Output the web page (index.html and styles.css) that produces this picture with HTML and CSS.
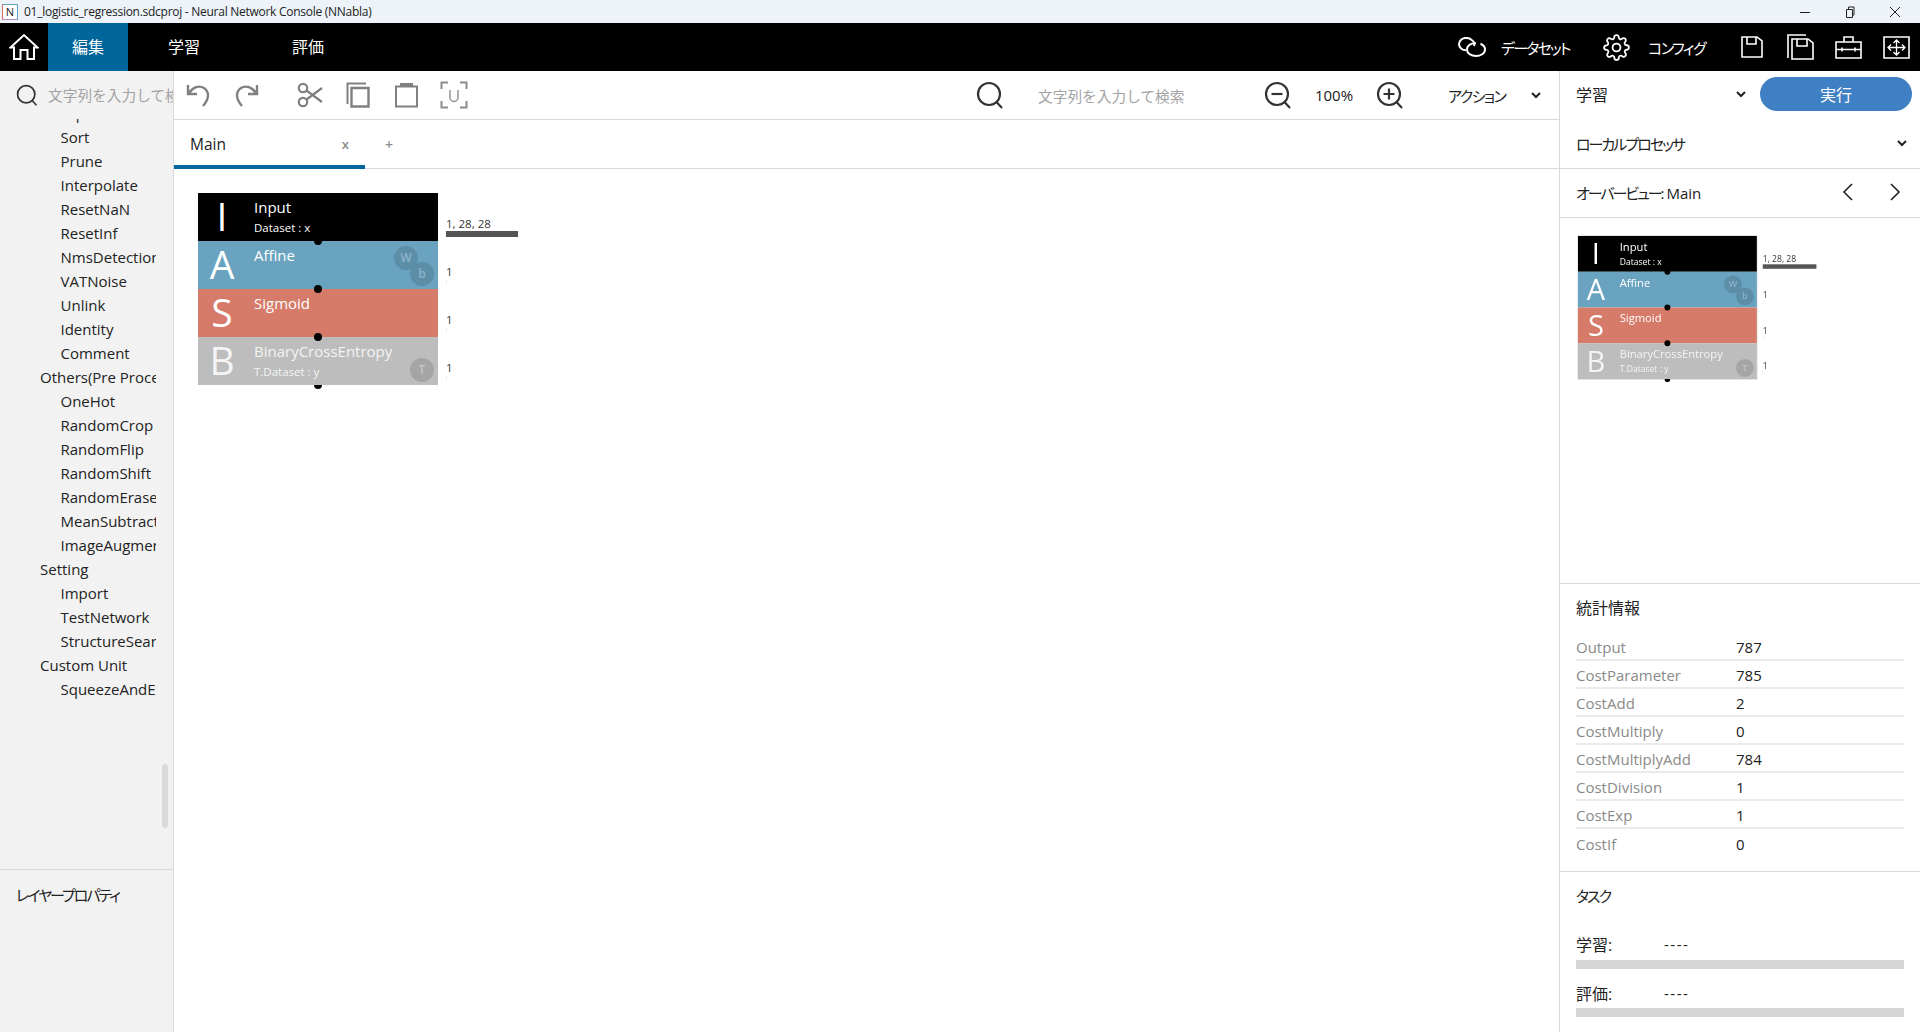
FILE: index.html
```html
<!DOCTYPE html>
<html lang="ja">
<head>
<meta charset="utf-8">
<title>Neural Network Console</title>
<link rel="stylesheet" href="styles.css">
</head>
<body>
<svg class="defs" width="0" height="0">
  <symbol id="chev-down" viewBox="0 0 12 12"><path d="M2 4l4 4 4-4" fill="none" stroke="currentColor" stroke-width="2"/></symbol>
  <symbol id="lens" viewBox="0 0 28 28"><circle cx="13" cy="13" r="11" fill="none" stroke="currentColor" stroke-width="2.2"/><path d="M20.5 21l5.5 6" fill="none" stroke="currentColor" stroke-width="2.2"/></symbol>
  <symbol id="floppy" viewBox="0 0 22 22"><path d="M1 1H16L21 5V21H1ZM6 1V8H15V1" fill="none" stroke="currentColor" stroke-width="1.6"/></symbol>
</svg>
<div class="app">
  <div class="titlebar">
    <span class="app-icon">N</span>
    <span class="title-text">01_logistic_regression.sdcproj - Neural Network Console (NNabla)</span>
    <div class="win-controls">
      <svg width="12" height="12" viewBox="0 0 12 12"><path d="M1 6.5h10" stroke="#222" stroke-width="1"/></svg>
      <svg width="12" height="12" viewBox="0 0 12 12"><path d="M2.5 3.5h6v8h-6zM4.5 3.5V1h5.500v8H8.500" fill="none" stroke="#222" stroke-width="1"/></svg>
      <svg width="12" height="12" viewBox="0 0 12 12"><path d="M1 1l10 10M11 1L1 11" stroke="#222" stroke-width="1"/></svg>
    </div>
  </div>

  <header class="topbar">
    <div class="home">
      <svg width="30" height="28" viewBox="0 0 30 28"><path d="M1.500 14.500L15 2l13.500 12.500H25V26h-6.500V17h-7v9H5V14.500Z" fill="none" stroke="#fff" stroke-width="2"/></svg>
    </div>
    <div class="tab tab-active">編集</div>
    <div class="tab tab-learn">学習</div>
    <div class="tab tab-eval">評価</div>
    <div class="top-actions">
      <div class="top-icon">
        <svg width="28" height="20" viewBox="0 0 28 20"><path d="M13 2.500C11.500 1.200 9.800.9 8 .9 4.200.9 1 3.500 1 7c0 3.500 3.200 6.200 7 6.200M13 2.500c2.500 1.500 4 4 3 6.500M18 6.300C13 5.800 9 8.500 9 12.500c0 3.800 4 6.500 9 6.500 4.500 0 9-2.500 9-6.500 0-2.500-2-4.800-4.500-5.800" fill="none" stroke="#fff" stroke-width="2"/></svg>
      </div>
      <span class="top-label label-dataset">データセット</span>
      <div class="top-icon">
        <svg width="27" height="27" viewBox="0 0 24 24"><circle cx="12" cy="12" r="3.500" fill="none" stroke="#fff" stroke-width="1.600"/><path d="M19.400 15a1.650 1.650 0 0 0 .33 1.820l.06.06a2 2 0 0 1 0 2.830 2 2 0 0 1-2.830 0l-.06-.06a1.650 1.650 0 0 0-1.820-.33 1.650 1.650 0 0 0-1 1.510V21a2 2 0 0 1-2 2 2 2 0 0 1-2-2v-.09A1.650 1.650 0 0 0 9 19.400a1.650 1.650 0 0 0-1.820.33l-.06.06a2 2 0 0 1-2.830 0 2 2 0 0 1 0-2.830l.06-.06a1.650 1.650 0 0 0 .33-1.820 1.650 1.650 0 0 0-1.510-1H3a2 2 0 0 1-2-2 2 2 0 0 1 2-2h.09A1.650 1.650 0 0 0 4.600 9a1.650 1.650 0 0 0-.33-1.820l-.06-.06a2 2 0 0 1 0-2.830 2 2 0 0 1 2.830 0l.06.06a1.650 1.650 0 0 0 1.820.33H9a1.650 1.650 0 0 0 1-1.510V3a2 2 0 0 1 2-2 2 2 0 0 1 2 2v.09a1.650 1.650 0 0 0 1 1.510 1.650 1.650 0 0 0 1.820-.33l.06-.06a2 2 0 0 1 2.830 0 2 2 0 0 1 0 2.830l-.06.06a1.650 1.650 0 0 0-.33 1.820V9a1.650 1.650 0 0 0 1.510 1H21a2 2 0 0 1 2 2 2 2 0 0 1-2 2h-.09a1.650 1.650 0 0 0-1.510 1z" fill="none" stroke="#fff" stroke-width="1.600"/></svg>
      </div>
      <span class="top-label label-config">コンフィグ</span>
      <div class="top-icon"><svg class="ico-floppy" width="22" height="22"><use href="#floppy"/></svg></div>
      <div class="top-icon">
        <svg width="27" height="26" viewBox="0 0 27 26"><path d="M1 24V1H19" fill="none" stroke="#fff" stroke-width="1.600"/><path d="M5 5H21L26 9V25H5ZM10 5V12H20V5" fill="none" stroke="#fff" stroke-width="1.600"/></svg>
      </div>
      <div class="top-icon">
        <svg width="27" height="23" viewBox="0 0 27 23"><path d="M1 6H26V22H1ZM9 6V1H18V6M1 13.500H26M7 11.500V15.500M20 11.500V15.500" fill="none" stroke="#fff" stroke-width="1.600"/></svg>
      </div>
      <div class="top-icon">
        <svg width="27" height="23" viewBox="0 0 27 23"><path d="M1 1H26V22H1Z" fill="none" stroke="#fff" stroke-width="1.600"/><path d="M5 11.500H22M13.500 4V19M8 8.500L5 11.500 8 14.500M19 8.500L22 11.500 19 14.500M10.500 7L13.500 4 16.500 7M10.500 16L13.500 19 16.500 16" fill="none" stroke="#fff" stroke-width="1.300"/></svg>
      </div>
    </div>
  </header>

  <main class="workspace">
    <aside class="sidebar">
      <div class="side-search">
        <svg class="ico-lens-side" width="22" height="22"><use href="#lens"/></svg>
        <span class="side-placeholder">文字列を入力して検索</span>
      </div>
      <div class="tree">
        <ul class="tree-list">
          <li class="child">Flip</li>
          <li class="child">Sort</li>
          <li class="child">Prune</li>
          <li class="child">Interpolate</li>
          <li class="child">ResetNaN</li>
          <li class="child">ResetInf</li>
          <li class="child">NmsDetection</li>
          <li class="child">VATNoise</li>
          <li class="child">Unlink</li>
          <li class="child">Identity</li>
          <li class="child">Comment</li>
          <li class="parent">Others(Pre Process)</li>
          <li class="child">OneHot</li>
          <li class="child">RandomCrop</li>
          <li class="child">RandomFlip</li>
          <li class="child">RandomShift</li>
          <li class="child">RandomErase</li>
          <li class="child">MeanSubtraction</li>
          <li class="child">ImageAugmentation</li>
          <li class="parent">Setting</li>
          <li class="child">Import</li>
          <li class="child">TestNetwork</li>
          <li class="child">StructureSearch</li>
          <li class="parent">Custom Unit</li>
          <li class="child">SqueezeAndExcitation</li>
        </ul>
        <div class="scroll-thumb"></div>
      </div>
      <div class="layer-props"><span class="kana">レイヤープロパティ</span></div>
    </aside>

    <section class="center">
      <div class="toolbar">
        <div class="tool">
          <svg width="25" height="24" viewBox="0 0 25 24"><path d="M2 2v9h9" fill="none" stroke="#808080" stroke-width="2.400"/><path d="M2.500 10.500C7 4 13 2 18 5c5 3.500 6 10-1 18" fill="none" stroke="#808080" stroke-width="2.400"/></svg>
        </div>
        <div class="tool">
          <svg width="25" height="24" viewBox="0 0 25 24"><path d="M23 2v9h-9" fill="none" stroke="#808080" stroke-width="2.400"/><path d="M22.500 10.500C18 4 12 2 7 5 2 8.500 1 15 8 23" fill="none" stroke="#808080" stroke-width="2.400"/></svg>
        </div>
        <div class="tool tool-gap">
          <svg width="26" height="26" viewBox="0 0 26 26"><circle cx="6" cy="6" r="4.200" fill="none" stroke="#808080" stroke-width="2.200"/><circle cx="6" cy="20" r="4.200" fill="none" stroke="#808080" stroke-width="2.200"/><path d="M9.500 8.500L25 20M9.500 17.500L25 6" fill="none" stroke="#808080" stroke-width="2.200"/></svg>
        </div>
        <div class="tool">
          <svg width="24" height="26" viewBox="0 0 24 26"><path d="M1.500 22V1.500H20" fill="none" stroke="#808080" stroke-width="2"/><path d="M5.500 6H22.500V24.500H5.500Z" fill="none" stroke="#808080" stroke-width="2.400"/></svg>
        </div>
        <div class="tool">
          <svg width="24" height="26" viewBox="0 0 24 26"><path d="M2 4.500H23V24.500H2Z" fill="none" stroke="#808080" stroke-width="2"/><path d="M6 1H19V5H6Z" fill="#808080"/></svg>
        </div>
        <div class="tool">
          <svg width="28" height="28" viewBox="0 0 28 28"><path d="M8 1.500H1.500V8M20 1.500H26.500V8M8 26.500H1.500V20M20 26.500H26.500V20" fill="none" stroke="#8c8c8c" stroke-width="2"/><path d="M10 9V16.500a4 4 0 0 0 8 0V9" fill="none" stroke="#8c8c8c" stroke-width="1.400"/></svg>
        </div>
        <div class="tool-right">
          <div class="tool"><svg class="ico-lens" width="28" height="28"><use href="#lens"/></svg></div>
          <span class="search-placeholder">文字列を入力して検索</span>
          <div class="tool">
            <svg class="ico-lens" width="28" height="28" viewBox="0 0 28 28"><use href="#lens"/><path d="M7.500 13h11" stroke="currentColor" stroke-width="2.200"/></svg>
          </div>
          <span class="zoom-value">100%</span>
          <div class="tool">
            <svg class="ico-lens" width="28" height="28" viewBox="0 0 28 28"><use href="#lens"/><path d="M7.500 13h11M13 7.500v11" stroke="currentColor" stroke-width="2.200"/></svg>
          </div>
          <span class="action-label">アクション</span>
          <svg class="chev" width="12" height="12"><use href="#chev-down"/></svg>
        </div>
      </div>
      <div class="tabs">
        <div class="doc-tab">
          <span class="doc-tab-name">Main</span>
          <span class="doc-tab-close">x</span>
        </div>
        <span class="doc-tab-add">+</span>
      </div>
      <div class="canvas">
        <div class="graph">
          <div class="node node-input">
            <span class="node-letter">I</span>
            <div class="node-text"><span class="node-name">Input</span><span class="node-sub">Dataset : x</span></div>
            <span class="dim">1, 28, 28</span><span class="dim-bar dim-bar-full"></span><span class="port"></span>
          </div>
          <div class="node node-affine">
            <span class="node-letter">A</span>
            <div class="node-text"><span class="node-name">Affine</span></div>
            <span class="badge badge-w">W</span><span class="badge badge-b">b</span>
            <span class="dim">1</span><span class="dim-bar"></span><span class="port"></span>
          </div>
          <div class="node node-sigmoid">
            <span class="node-letter">S</span>
            <div class="node-text"><span class="node-name">Sigmoid</span></div>
            <span class="dim">1</span><span class="dim-bar"></span><span class="port"></span>
          </div>
          <div class="node node-loss">
            <span class="node-letter">B</span>
            <div class="node-text"><span class="node-name">BinaryCrossEntropy</span><span class="node-sub">T.Dataset : y</span></div>
            <span class="badge badge-b badge-t">T</span>
            <span class="dim">1</span><span class="dim-bar"></span><span class="port port-end"></span>
          </div>
        </div>
      </div>
    </section>

    <aside class="rightpanel">
      <div class="rp-row rp-run">
        <span class="rp-select">学習</span>
        <svg class="chev chev-run" width="12" height="12"><use href="#chev-down"/></svg>
        <button class="run-btn">実行</button>
      </div>
      <div class="rp-row rp-bordered">
        <span class="kana rp-grow">ローカルプロセッサ</span>
        <svg class="chev" width="12" height="12"><use href="#chev-down"/></svg>
      </div>
      <div class="rp-row rp-bordered rp-overview-head">
        <span class="rp-grow"><span class="kana">オーバービュー:</span> Main</span>
        <svg class="pager" width="14" height="20" viewBox="0 0 14 20"><path d="M11 2L3 10l8 8" fill="none" stroke="#222" stroke-width="1.600"/></svg>
        <svg class="pager" width="14" height="20" viewBox="0 0 14 20"><path d="M3 2l8 8-8 8" fill="none" stroke="#222" stroke-width="1.600"/></svg>
      </div>
      <div class="overview">
        <div class="graph graph-thumb">
          <div class="node node-input">
            <span class="node-letter">I</span>
            <div class="node-text"><span class="node-name">Input</span><span class="node-sub">Dataset : x</span></div>
            <span class="dim">1, 28, 28</span><span class="dim-bar dim-bar-full"></span><span class="port"></span>
          </div>
          <div class="node node-affine">
            <span class="node-letter">A</span>
            <div class="node-text"><span class="node-name">Affine</span></div>
            <span class="badge badge-w">W</span><span class="badge badge-b">b</span>
            <span class="dim">1</span><span class="dim-bar"></span><span class="port"></span>
          </div>
          <div class="node node-sigmoid">
            <span class="node-letter">S</span>
            <div class="node-text"><span class="node-name">Sigmoid</span></div>
            <span class="dim">1</span><span class="dim-bar"></span><span class="port"></span>
          </div>
          <div class="node node-loss">
            <span class="node-letter">B</span>
            <div class="node-text"><span class="node-name">BinaryCrossEntropy</span><span class="node-sub">T.Dataset : y</span></div>
            <span class="badge badge-b badge-t">T</span>
            <span class="dim">1</span><span class="dim-bar"></span><span class="port port-end"></span>
          </div>
        </div>
      </div>
      <section class="stats">
        <h2 class="rp-heading">統計情報</h2>
        <dl class="stat-list">
          <div class="stat"><dt>Output</dt><dd>787</dd></div>
          <div class="stat"><dt>CostParameter</dt><dd>785</dd></div>
          <div class="stat"><dt>CostAdd</dt><dd>2</dd></div>
          <div class="stat"><dt>CostMultiply</dt><dd>0</dd></div>
          <div class="stat"><dt>CostMultiplyAdd</dt><dd>784</dd></div>
          <div class="stat"><dt>CostDivision</dt><dd>1</dd></div>
          <div class="stat"><dt>CostExp</dt><dd>1</dd></div>
          <div class="stat stat-last"><dt>CostIf</dt><dd>0</dd></div>
        </dl>
      </section>
      <section class="tasks">
        <h2 class="rp-heading kana">タスク</h2>
        <div class="task"><span class="task-name">学習:</span><span class="task-state">----</span></div>
        <div class="task-bar"></div>
        <div class="task task-next"><span class="task-name">評価:</span><span class="task-state">----</span></div>
        <div class="task-bar"></div>
      </section>
    </aside>
  </main>
</div>
</body>
</html>
```
FILE: styles.css
```css
* { box-sizing: border-box; }
html, body { margin: 0; height: 100%; overflow: hidden; }
body {
  font-family: "Open Sans", "Noto Sans CJK JP", sans-serif;
  font-size: 15px;
  color: #222;
  background: #fff;
}
.defs { position: absolute; }
.app { display: flex; flex-direction: column; height: 1032px; }
.kana { font-feature-settings: "palt"; letter-spacing: -2px; }

/* title bar */
.titlebar { height: 23px; flex: none; display: flex; align-items: center; padding-left: 2px; background: #edf3f9; }
.app-icon {
  width: 16px; height: 16px; border: 1px solid; border-color: #5aa9b5 #5aa0d0 #b58acb #d46a5a;
  background: #fff; font-size: 11px; line-height: 14px; text-align: center; color: #222;
}
.title-text { margin-left: 6px; font-size: 12px; letter-spacing: -.27px; color: #222; white-space: nowrap; }
.win-controls { margin-left: auto; display: flex; gap: 33px; padding-right: 19px; }

/* top bar */
.topbar { height: 48px; flex: none; display: flex; background: #000; color: #fff; }
.home { width: 48px; display: flex; align-items: center; justify-content: center; }
.tab { padding: 0 24px; line-height: 48px; font-size: 16px; }
.tab-active { background: #00669b; }
.tab-learn { margin-left: 16px; }
.tab-eval { margin-left: 44px; }
.top-actions { margin-left: auto; display: flex; align-items: center; }
.top-icon { width: 48px; height: 48px; display: flex; align-items: center; justify-content: center; }
.ico-floppy { color: #fff; }
.top-label { font-size: 15px; font-feature-settings: "palt"; letter-spacing: -1.500px; white-space: nowrap; }
.label-dataset { margin-left: 5px; width: 91px; letter-spacing: -1.800px; }
.label-config { margin-left: 8px; width: 80px; }

/* layout */
.workspace { flex: 1; display: flex; min-height: 0; }

/* sidebar */
.sidebar { width: 174px; flex: none; display: flex; flex-direction: column; background: #f2f2f2; border-right: 1px solid #d9d9d9; }
.side-search { height: 48px; flex: none; display: flex; align-items: center; padding-left: 16px; overflow: hidden; }
.ico-lens-side { color: #333; flex: none; }
.side-placeholder { margin: 0 0 2px 10px; font-size: 14.700px; color: #a3a3a3; white-space: nowrap; }
.tree { position: relative; height: 751px; flex: none; overflow: hidden; border-bottom: 1px solid #d9d9d9; }
.tree-list { list-style: none; margin: -18px 0 0; padding: 0; width: 156px; }
.tree-list li { height: 24px; line-height: 24px; font-size: 15px; color: #222; white-space: nowrap; overflow: hidden; }
.child { padding-left: 60.500px; }
.parent { padding-left: 40px; }
.scroll-thumb { position: absolute; left: 162px; top: 645px; width: 6px; height: 64px; border-radius: 3px; background: #d9d9d9; }
.layer-props { padding: 13px 16px; font-size: 15px; line-height: 24px; white-space: nowrap; }

/* center */
.center { flex: 1; min-width: 0; display: flex; flex-direction: column; }
.toolbar { height: 49px; flex: none; display: flex; align-items: center; border-bottom: 1px solid #d9d9d9; }
.tool { width: 48px; height: 48px; flex: none; display: flex; align-items: center; justify-content: center; }
.tool-gap { margin-left: 16px; }
.tool-right { margin-left: auto; display: flex; align-items: center; padding-right: 17px; }
.ico-lens { color: #333; }
.search-placeholder { margin-left: 24px; width: 216px; font-size: 14.700px; color: #a3a3a3; white-space: nowrap; }
.zoom-value { width: 64px; text-align: center; font-size: 15px; }
.action-label { margin-left: 34px; width: 82px; font-size: 15px; font-feature-settings: "palt"; letter-spacing: -1.500px; white-space: nowrap; }
.chev { color: #222; flex: none; }
.tabs { height: 49px; flex: none; display: flex; align-items: center; border-bottom: 1px solid #d9d9d9; }
.doc-tab { width: 191px; height: 48px; flex: none; display: flex; align-items: center; justify-content: space-between; padding: 2px 16px 0 16px; border-bottom: 4px solid #00669b; margin-bottom: -1px; }
.doc-tab-name { font-size: 15.500px; }
.doc-tab-close { font-size: 13px; font-weight: 600; color: #8c8c8c; }
.doc-tab-add { margin-left: 20px; font-size: 14px; font-weight: 600; color: #8c8c8c; }
.canvas { flex: 1; padding: 24px; overflow: hidden; }

/* graph */
.graph { width: 240px; display: flex; flex-direction: column; }
.node { position: relative; height: 48px; display: flex; color: #fff; }
.node-input { background: #000; }
.node-affine { background: #6aa3c0; }
.node-sigmoid { background: #d67a69; }
.node-loss { background: #bdbdbd; color: #f4f4f4; }
.node-letter { width: 48px; flex: none; text-align: center; font-size: 39px; font-weight: 400; line-height: 46px; }
.node-text { margin-left: 8px; padding-top: 3px; display: flex; flex-direction: column; }
.node-name { font-size: 15px; line-height: 22px; white-space: nowrap; }
.node-sub { margin-top: 2px; font-size: 11.500px; line-height: 16px; white-space: nowrap; }
.badge { position: absolute; width: 24px; height: 24px; border-radius: 50%; text-align: center; font-size: 12px; font-weight: 600; line-height: 24px; }
.badge-w { left: 196px; top: 5px; background: #5d8ea8; color: #8db3c9; }
.badge-b { left: 212px; top: 21px; background: #5d8ea8; color: #8db3c9; }
.badge-t { background: #a5a5a5; color: #c4c4c4; }
.dim { position: absolute; left: 248px; top: 23px; font-size: 11.500px; line-height: 16px; color: #333; white-space: nowrap; }
.dim-bar { position: absolute; left: 248px; top: 38px; width: 1px; height: 6px; background: #eee; }
.dim-bar-full { width: 72px; background: #555; }
.port { position: absolute; z-index: 1; left: 116px; top: 44px; width: 8px; height: 8px; border-radius: 50%; background: #000; }
.port-end { clip-path: inset(50% 0 0 0); }

/* right panel */
.rightpanel { width: 361px; flex: none; display: flex; flex-direction: column; border-left: 1px solid #d9d9d9; }
.rp-row { height: 49px; flex: none; display: flex; align-items: center; padding: 0 12px 2px 16px; }
.rp-bordered { border-bottom: 1px solid #d9d9d9; }
.rp-grow { flex: 1; white-space: nowrap; font-size: 15px; }
.rp-select { flex: 1; font-size: 16px; }
.rp-run { padding: 0 8px 3px 16px; }
.chev-run { margin-right: 13px; }
.run-btn { width: 152px; height: 34px; border: 0; border-radius: 17px; background: #3f7fc3; color: #fff; font: inherit; font-size: 16px; }
.rp-overview-head { padding-right: 18px; }
.pager { flex: none; margin-left: 33px; }
.overview { height: 366px; flex: none; padding: 18px 0 0 18px; border-bottom: 1px solid #d9d9d9; overflow: hidden; }
.graph-thumb { transform: scale(.745); transform-origin: 0 0; outline: 2px solid #ddd; outline-offset: -1px; }

.stats { height: 288px; flex: none; padding: 12px 16px 0; border-bottom: 1px solid #d9d9d9; }
.rp-heading { margin: 0 0 13px; font-size: 16px; font-weight: 400; line-height: 24px; }
.stat-list { margin: 0; }
.stat { height: 28px; display: flex; align-items: center; padding-top: 2px; border-bottom: 2px solid #ebebeb; }
.stat-last { border-bottom: 0; }
.stat dt { width: 160px; font-size: 15px; color: #8a8a8a; }
.stat dd { margin: 0; font-size: 15px; color: #222; }

.tasks { padding: 12px 16px 0; }
.tasks .rp-heading { margin-bottom: 24px; font-size: 15px; }
.task { height: 24px; display: flex; align-items: center; font-size: 16px; }
.task-name { width: 88px; }
.task-state { font-size: 15px; letter-spacing: 1.500px; }
.task-next { margin-top: 12px; }
.task-bar { height: 9px; margin-top: 4px; background: #d6d6d6; }
.task-next + .task-bar { margin-top: 3px; }
```
